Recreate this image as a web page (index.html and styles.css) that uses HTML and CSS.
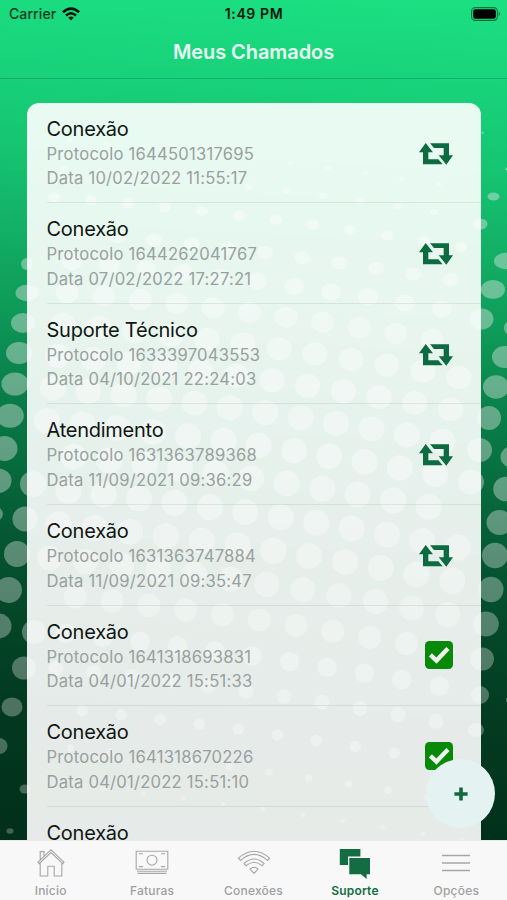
FILE: index.html
```html
<!DOCTYPE html>
<html lang="pt-BR">
<head>
<meta charset="utf-8">
<title>Meus Chamados</title>
<link rel="stylesheet" href="styles.css">
</head>
<body>
<svg class="backdrop" id="dots" viewBox="0 0 507 840" aria-hidden="true">
  <defs><linearGradient id="dotFill" gradientUnits="userSpaceOnUse" x1="0" y1="120" x2="0" y2="840"><stop offset="0" stop-color="#dce6e0" stop-opacity=".46"/><stop offset=".5" stop-color="#dce2de" stop-opacity=".42"/><stop offset="1" stop-color="#d5dcd8" stop-opacity=".3"/></linearGradient></defs>
  <g id="dotLayer" fill="url(#dotFill)"></g>
</svg>
<svg class="defs" aria-hidden="true">
  <symbol id="retweet" viewBox="0 0 102 66">
    <path d="M20 0 42 28H28V49H58L71 64H12V28H0zM33 1H90V37H102L82 65 59 37H74V15H45z"/>
  </symbol>
  <symbol id="check" viewBox="0 0 83 83">
    <rect width="83" height="83" rx="13"/>
    <path d="M16 41 34 58 68 22" fill="none" stroke="#eef5ef" stroke-width="13"/>
  </symbol>
</svg>
<div class="app">
  <div class="status">
    <span class="carrier">Carrier
      <svg width="18" height="14" viewBox="0 0 18 14" fill="none" stroke="#03150b" stroke-width="2.5"><path d="M.9 5.2Q9-2 17.1 5.2M4 8.5Q9 4 14 8.5"/><path d="M6.2 10.6Q9 8.3 11.8 10.6L9 13.6z" fill="#03150b" stroke="none"/></svg>
    </span>
    <span class="clock">1:49 PM</span>
    <svg class="battery" width="30" height="14" viewBox="0 0 30 14"><rect x=".6" y=".6" width="25.8" height="12.8" rx="3.6" fill="none" stroke="#08713f" stroke-width="1.1"/><rect x="2.2" y="2.2" width="22.6" height="9.6" rx="2"/><path d="M27.8 4.8q2.6 2.2 0 4.4z" fill="#08713f"/></svg>
  </div>
  <header class="nav"><h1>Meus Chamados</h1></header>
  <main class="content">
    <ul class="card">
      <li class="row"><div><h2>Conexão</h2><p>Protocolo 1644501317695</p><p>Data 10/02/2022 11:55:17</p></div><svg class="pending"><use href="#retweet"/></svg></li>
      <li class="row"><div><h2>Conexão</h2><p>Protocolo 1644262041767</p><p>Data 07/02/2022 17:27:21</p></div><svg class="pending"><use href="#retweet"/></svg></li>
      <li class="row"><div><h2>Suporte Técnico</h2><p>Protocolo 1633397043553</p><p>Data 04/10/2021 22:24:03</p></div><svg class="pending"><use href="#retweet"/></svg></li>
      <li class="row"><div><h2>Atendimento</h2><p>Protocolo 1631363789368</p><p>Data 11/09/2021 09:36:29</p></div><svg class="pending"><use href="#retweet"/></svg></li>
      <li class="row"><div><h2>Conexão</h2><p>Protocolo 1631363747884</p><p>Data 11/09/2021 09:35:47</p></div><svg class="pending"><use href="#retweet"/></svg></li>
      <li class="row"><div><h2>Conexão</h2><p>Protocolo 1641318693831</p><p>Data 04/01/2022 15:51:33</p></div><svg class="done"><use href="#check"/></svg></li>
      <li class="row"><div><h2>Conexão</h2><p>Protocolo 1641318670226</p><p>Data 04/01/2022 15:51:10</p></div><svg class="done"><use href="#check"/></svg></li>
      <li class="row"><div><h2>Conexão</h2></div></li>
    </ul>
    <button class="fab" aria-label="Novo chamado"><svg width="14" height="14" viewBox="0 0 14 14"><path d="M7 .4V13.6M.4 7H13.6" stroke="#12683f" stroke-width="3.6"/></svg></button>
  </main>
  <nav class="tabs">
    <a class="tab"><svg width="28" height="30" viewBox="0 0 28 30"><path d="M1 14.2 14 1.8 27 14.2 25.8 15.6 14 4.5 2.2 15.6zM3.2 11.8V3.6H7V8M3.2 15V28H10.8V18.2H17.2V28H24.8V15"/></svg><span>Início</span></a>
    <a class="tab"><svg width="34" height="30" viewBox="0 0 34 30"><path d="M1.2 3.2H32.8V21.2H1.2zM3.8 5.8H8M26 5.8H30.2M3.8 18.6H8M26 18.6H30.2"/><circle cx="17" cy="12.2" r="5"/><path d="M2 23.2H32M2.6 25.4H31.4"/></svg><span>Faturas</span></a>
    <a class="tab"><svg width="34" height="30" viewBox="0 0 34 30"><path d="M1.4 10.2Q17-3.8 32.6 10.2L30.4 12.4Q17 .4 3.6 12.4zM7 15.5Q17 6.6 27 15.5L24.8 17.7Q17 10.8 9.2 17.7zM13 21Q17 17.6 21 21L17 25.4z"/></svg><span>Conexões</span></a>
    <a class="tab active"><svg width="32" height="32" viewBox="0 0 32 32"><path d="M.8 1H21.4V8.6H9V17H.8zM10.3 10H31V26.2H27.6V31L22 26.2H10.3z"/></svg><span>Suporte</span></a>
    <a class="tab"><svg width="28" height="30" viewBox="0 0 28 30"><path d="M0 7.5H28M0 15H28M0 22.5H28" stroke-width="1.5"/></svg><span>Opções</span></a>
  </nav>
</div>
<script src="dots.js"></script>
</body>
</html>
```
FILE: styles.css
```css
* { box-sizing: border-box; margin: 0; padding: 0; }
body {
  width: 507px;
  height: 900px;
  overflow: hidden;
  font-family: Inter, "Liberation Sans", sans-serif;
  background: linear-gradient(183deg, #1be082 0, #18d27a 90px, #15c571 170px, #12ae65 260px, #0e9857 340px, #09804a 410px, #076b3d 490px, #055531 570px, #044526 650px, #033a20 730px, #02301a 850px);
}
.backdrop { position: absolute; left: 0; top: 0; width: 507px; height: 840px; }
.defs { position: absolute; width: 0; height: 0; }
.app { position: relative; height: 900px; display: flex; flex-direction: column; }
.status {
  height: 27px;
  display: grid;
  grid-template-columns: 1fr auto 1fr;
  align-items: center;
  padding: 0 6px 0 9px;
  font-size: 14px;
  color: #043a20;
}
.carrier { display: flex; align-items: center; gap: 6px; letter-spacing: .1px; font-weight: 500; }
.clock { font-weight: 600; color: #03150b; letter-spacing: .6px; margin-right: 2px; }
.battery { justify-self: end; }
.nav {
  height: 52px;
  display: flex;
  justify-content: center;
  align-items: center;
  padding-bottom: 2px;
  border-bottom: 1px solid #13b068;
}
h1 { font-size: 20px; font-weight: 600; color: #e9fff3; letter-spacing: -.07px; }
.content { position: relative; flex: 1; min-height: 0; overflow: hidden; padding: 23.5px 26px 0 27px; }
.card {
  list-style: none;
  border-radius: 12px;
  background: rgba(255, 255, 255, .9);
  padding-left: 19.5px;
  height: 820px;
}
.row {
  height: 100.65px;
  display: flex;
  justify-content: space-between;
  padding: 13px 28px 0 0;
  border-bottom: 1px solid rgba(100, 130, 115, .14);
}
h2 { font-size: 20px; font-weight: 400; line-height: 26px; letter-spacing: -.25px; color: #101613; }
.row p { font-size: 16.6px; line-height: 24.5px; letter-spacing: .23px; color: #98a19d; }
.pending { width: 34px; height: 22px; margin-top: 27px; fill: #0c6b40; }
.done { width: 28px; height: 28px; margin-top: 22.5px; fill: #098909; }
.fab {
  position: absolute;
  right: 12px;
  bottom: 12px;
  width: 69px;
  height: 69px;
  border: 0;
  border-radius: 50%;
  background: #e4f2f1;
  display: flex;
  align-items: center;
  justify-content: center;
}
.tabs { height: 60px; display: flex; background: #f8f8f8; border-top: 1px solid #e7e9e8; }
.tab {
  flex: 1;
  display: flex;
  flex-direction: column;
  align-items: center;
  justify-content: space-between;
  padding: 7px 0 2px;
  font-size: 12px;
  line-height: 15px;
  font-weight: 500;
  letter-spacing: .2px;
  color: #a0a0a0;
}
.tab svg { fill: none; stroke: #a6a6a6; stroke-width: 1.1; }
.tab.active { color: #136c42; font-weight: 600; }
.tab.active svg { fill: #136c42; stroke: none; }
```
FILE: dots.js
```js
// Halftone dots: [cx, cy, rx, ry] along both margins.
const margins = [
  [27,264,6,6],[27,293,11.5,8.3],[23,323,12,10],[19,353,13,11],[15,384,13.5,11.5],[10,415.7,13.8,12],
  [4.5,448.5,13,12.5],[-2.5,480.7,14,12.5],[33,484,13,13],[-10,514,13,9],[25,519,12.5,12.5],[17,554,13,13],
  [8.5,590,13.5,13],[-1,626,12.5,12.5],[34,632,12,12],[24,668,12,11.5],[12,707,10.5,9.5],[-1,746,8.5,8],
  [25,789,5.5,4.5],[10,831,3.5,2.7],
  [482.7,132.7,1.3,1],[507,169,2,1.6],[493.5,196.5,6,4],[480.5,224,7,5.5],[506,261,12,8.3],[493,289.5,12,9.5],
  [481.5,319,12,10.5],[514,328,10,9],[505,357,13,11],[496,387,13,11.7],[489,418,12,12],[479.5,450,12.5,12],
  [513,457,12.5,11],[471,482,13,12.5],[506,489,12.8,12.3],[499.5,522.5,13,12.5],[495,555.5,13,12.7],[491,589.5,12.5,12.7],
  [486,624,12.8,12.5],[482,659,12,11.5],[480,695,9,9],[476,730,8,7],[511,700,5,4]
];
// One entry per lattice row behind the list: [x, y, column step, rx, ry].
const rows = [
  [365,173,37,3,2],[360,201,37,4,3],[350,230,37,6,5],[339.3,262.7,37,8,6.5],[331,291.7,37,10,8.5],
  [322.7,322.3,36.5,11.5,10.5],[315,354,36,12.5,11.5],[307.7,385.7,35.7,12.7,12],
  [300.7,417.7,35.4,13,12.5],[294,450.7,35.3,13,12.8],[286.7,483.3,35.5,13,13],[280.7,517.3,35.4,13,13],
  [273.3,550.7,35.8,13,13],[266.7,584.3,36.2,12.5,12.5],[259.3,620,36.8,11.5,11.5],[252.3,656,37.4,9.8,9.8],
  [246,691,38,7.5,7.5],[238.3,729.3,39,5.7,5.7],[229.3,766.7,39.7,3.7,3.7],[223,803.7,40,2.3,2.3]
];
const dots = margins.slice();
for (const [x, y, step, rx, ry] of rows) {
  for (let i = -10; i <= 8; i++) {
    const cx = x + i * step;
    if (cx > 46 && cx < 464) dots.push([cx, y + 5.3 * i + .15 * i * i, rx, ry]);
  }
}
document.getElementById("dotLayer").innerHTML = dots
  .map(([x, y, a, b]) => `<ellipse cx="${x}" cy="${y}" rx="${a}" ry="${b}"/>`).join("");
```
